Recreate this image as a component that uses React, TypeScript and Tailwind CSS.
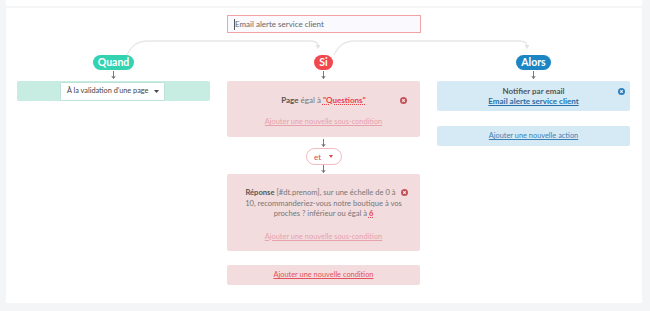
import React from "react";

const Arrow = ({ className = "" }: { className?: string }) => (
  <svg width="5" height="8" viewBox="0 0 5 8" className={className}>
    <line x1="2.5" y1="0" x2="2.5" y2="7" stroke="#555" strokeWidth="0.8" />
    <path d="M0.8 5 L2.5 7.6 L4.2 5" fill="none" stroke="#555" strokeWidth="0.8" />
  </svg>
);

const XIcon = ({ color }: { color: string }) => (
  <svg width="7" height="7" viewBox="0 0 8 8">
    <circle cx="4" cy="4" r="4" fill={color} />
    <path d="M2.6 2.6 L5.4 5.4 M5.4 2.6 L2.6 5.4" stroke="#fff" strokeWidth="1.2" />
  </svg>
);

export default function App() {
  return (
    <div
      className="relative w-[650px] h-[311px] bg-[#f4f5f7] overflow-hidden"
      style={{ fontFamily: 'Lato, "Open Sans", "Liberation Sans", sans-serif' }}
    >
      <div className="ml-[6px] mr-[8px] h-[6px] bg-white" />
      <div className="mt-[2px] ml-[6px] mr-[8px] h-[295px] bg-white flex flex-col pt-[7px]">
        <div className="flex justify-center">
          <div className="w-[194px] h-[18px] border border-[#f3a3a6] bg-[#f9f9fe] flex items-center pl-[6px]">
            <span className="w-px h-[11px] bg-[#555]" />
            <span className="text-[8px] text-[#666] leading-none">Email alerte service client</span>
          </div>
        </div>
        <div className="grid grid-cols-3 gap-x-[17px] pl-[11px] pr-[12px] mt-[22px]">
          {/* Quand column */}
          <div className="flex flex-col items-center">
            <div className="h-[15px] px-[5px] rounded-full bg-[#33d3b2] text-white font-bold text-[10.5px] leading-[15px]">
              Quand
            </div>
            <Arrow className="mt-[1px]" />
            <div className="mt-[2px] w-full h-[20px] bg-[#c7ece2] rounded-[2px] flex justify-center items-center">
              <div className="ml-[-2px] w-[103px] h-[17px] bg-white shadow-[0_0_1px_rgba(0,0,0,0.25)] flex items-center justify-between pl-[6px] pr-[5px]">
                <span className="text-[7.3px] text-[#444] leading-none">À la validation d'une page</span>
                <svg width="5" height="3" viewBox="0 0 5 3">
                  <path d="M0 0 L5 0 L2.5 3 Z" fill="#444" />
                </svg>
              </div>
            </div>
          </div>

          {/* Si column */}
          <div className="flex flex-col items-center">
            <div className="w-[19px] h-[15px] rounded-full bg-[#f2474f] text-white font-bold text-[10.5px] leading-[15px] text-center">
              Si
            </div>
            <Arrow className="mt-[1px]" />
            <div className="mt-[2px] w-full h-[56px] bg-[#f2dcdd] rounded-[2px] relative flex flex-col items-center pt-[14px]">
              <div className="text-[8px] leading-[10px] text-[#777]">
                <span className="font-bold text-[#555]">Page</span> égal à{" "}
                <span className="font-bold text-[#e8414a] underline decoration-dotted">"Questions"</span>
              </div>
              <div className="absolute right-[13px] top-[16px]">
                <XIcon color="#c4525a" />
              </div>
              <div className="mt-[12px] text-[7.4px] leading-[10px] text-[#e8a2ad] underline">
                Ajouter une nouvelle sous-condition
              </div>
            </div>
            <Arrow className="mt-[2px]" />
            <div className="mt-[1px] w-[36px] h-[17px] rounded-full border border-[#f0b9bd] bg-white flex items-center justify-center gap-[8px]">
              <span className="text-[8px] text-[#e04a53] leading-none">et</span>
              <svg width="4" height="3" viewBox="0 0 4 3">
                <path d="M0 0 L4 0 L2 3 Z" fill="#e04a53" />
              </svg>
            </div>
            <Arrow />
            <div className="mt-[1px] w-full h-[77px] bg-[#f2dcdd] rounded-[2px] relative flex flex-col items-center pt-[13px]">
              <div className="flex flex-col items-center text-[7.6px] leading-[10.5px] text-[#777] whitespace-nowrap">
                <span className="pr-[6px]">
                  <span className="font-bold text-[#555]">Réponse</span> [#dt.prenom], sur une échelle de 0 à
                </span>
                <span>10, recommanderiez-vous notre boutique à vos</span>
                <span>
                  proches ? inférieur ou égal à{" "}
                  <span className="font-bold text-[#e8414a] underline decoration-dotted">6</span>
                </span>
              </div>
              <div className="absolute right-[12px] top-[15px]">
                <XIcon color="#c4525a" />
              </div>
              <div className="mt-[13px] text-[7.4px] leading-[10px] text-[#e8a2ad] underline">
                Ajouter une nouvelle sous-condition
              </div>
            </div>
            <div className="mt-[14px] w-full h-[20px] bg-[#f2dcdd] rounded-[2px] flex items-center justify-center">
              <span className="text-[7.4px] leading-[10px] text-[#e4515d] underline">Ajouter une nouvelle condition</span>
            </div>
          </div>

          {/* Alors column */}
          <div className="flex flex-col items-center">
            <div className="h-[15px] px-[5px] rounded-full bg-[#1b86c3] text-white font-bold text-[10.5px] leading-[15px]">
              Alors
            </div>
            <Arrow className="mt-[1px]" />
            <div className="mt-[2px] w-full h-[30px] bg-[#d6eaf6] rounded-[2px] relative flex flex-col items-center justify-center">
              <div className="text-[8px] leading-[10px] font-bold text-[#555]">Notifier par email</div>
              <div className="text-[8px] leading-[10px] font-bold text-[#2a6ea6] underline">
                Email alerte service client
              </div>
              <div className="absolute right-[5px] top-[7px]">
                <XIcon color="#2e7fbd" />
              </div>
            </div>
            <div className="mt-[15px] w-full h-[20px] bg-[#d6eaf6] rounded-[2px] flex items-center justify-center">
              <span className="text-[7.4px] leading-[10px] text-[#3c7fb4] underline">Ajouter une nouvelle action</span>
            </div>
          </div>
        </div>
      </div>

      <svg
        className="absolute left-0 top-0 pointer-events-none"
        width="650"
        height="311"
        viewBox="0 0 650 311"
      >
        <path
          d="M127 55 C131 47 136 41 148 41 L310 41 Q317 41 318 45"
          fill="none"
          stroke="#e8e8e8"
          strokeWidth="1.3"
        />
        <path d="M315.5 45 L320.5 45 L318 49 Z" fill="#e2e2e2" />
        <path
          d="M334 55 C338 47 343 41 355 41 L519 41 Q526 41 527 45"
          fill="none"
          stroke="#e8e8e8"
          strokeWidth="1.3"
        />
        <path d="M524.5 45 L529.5 45 L527 49 Z" fill="#e2e2e2" />
      </svg>
    </div>
  );
}
